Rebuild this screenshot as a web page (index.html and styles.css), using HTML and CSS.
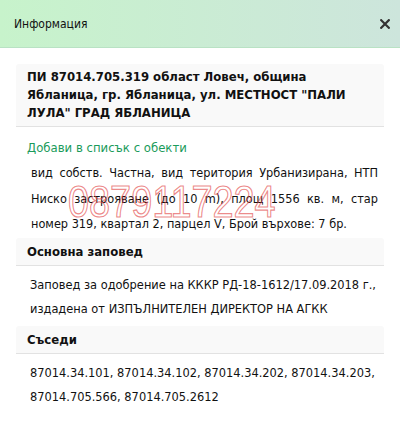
FILE: index.html
```html
<!DOCTYPE html>
<html lang="bg">
<head>
<meta charset="utf-8">
<link rel="stylesheet" href="styles.css">
</head>
<body>
<div class="dialog">
  <div class="header">
    <span class="title">Информация</span>
    <svg class="close" width="10" height="10" viewBox="0 0 10 10"><path d="M1.2 1.2L8.8 8.8M8.8 1.2L1.2 8.8" stroke="#333" stroke-width="2.2" stroke-linecap="square"/></svg>
  </div>
  <div class="content">
    <div class="card card-main">ПИ 87014.705.319 област Ловеч, община Ябланица, гр. Ябланица, ул. МЕСТНОСТ "ПАЛИ ЛУЛА" ГРАД ЯБЛАНИЦА</div>
    <div class="link">Добави в списък с обекти</div>
    <div class="desc">
      <p>вид собств. Частна, вид територия Урбанизирана, НТП Ниско застрояване (до 10 m), площ 1556 кв. м, стар номер 319, квартал 2, парцел V, Брой върхове: 7 бр.</p>
      <span class="watermark">0879117224</span>
    </div>
    <div class="card card-sec">Основна заповед</div>
    <p class="text">Заповед за одобрение на КККР РД-18-1612/17.09.2018 г., издадена от ИЗПЪЛНИТЕЛЕН ДИРЕКТОР НА АГКК</p>
    <div class="card card-sec">Съседи</div>
    <p class="text">87014.34.101, 87014.34.102, 87014.34.202, 87014.34.203, 87014.705.566, 87014.705.2612</p>
  </div>
</div>
</body>
</html>
```
FILE: styles.css
```css
html, body {
  margin: 0;
  padding: 0;
  background: #fff;
}
body {
  font-family: "DejaVu Sans Condensed", "DejaVu Sans", sans-serif;
  color: #111;
  width: 400px;
  height: 425px;
  overflow: hidden;
}
.header {
  height: 48px;
  box-sizing: border-box;
  border-bottom: 1px solid #b9e2c4;
  background: linear-gradient(to right, #c7f3cb, #cde5dc);
  display: flex;
  align-items: center;
  justify-content: space-between;
  padding: 0 10px 0 14px;
}
.title {
  font-size: 12px;
  color: #111;
  padding-top: 1px;
}
.close {
  display: block;
  margin-top: 1px;
}
.content {
  padding: 16px 16px 0 16px;
}
.card {
  background: #f9f9f9;
  border-bottom: 1px solid #e2e2e2;
  border-radius: 3px 3px 0 0;
  font-weight: bold;
  font-size: 13px;
  color: #111;
  padding: 0 11px;
}
.card-main {
  line-height: 18px;
  padding-top: 4px;
  padding-bottom: 4px;
}
.card-sec {
  line-height: 27px;
}
.link {
  color: #1b9b5b;
  font-size: 13px;
  padding: 11px 11px 0;
  line-height: 20px;
}
.desc {
  position: relative;
  padding: 2px 6px 1px 15px;
}
.desc p {
  margin: 0;
  font-size: 12.6px;
  line-height: 25.5px;
  text-align: justify;
}
.watermark {
  position: absolute;
  left: 52px;
  top: 22px;
  font-family: "Liberation Sans", sans-serif;
  font-size: 44px;
  line-height: 44px;
  color: transparent;
  -webkit-text-stroke: 1.2px rgba(225, 70, 70, 0.65);
  transform: scaleX(0.86);
  transform-origin: left top;
  white-space: nowrap;
  pointer-events: none;
}
.text {
  margin: 0;
  padding: 7px 0 5px 14px;
  font-size: 12.7px;
  line-height: 24px;
}
```
